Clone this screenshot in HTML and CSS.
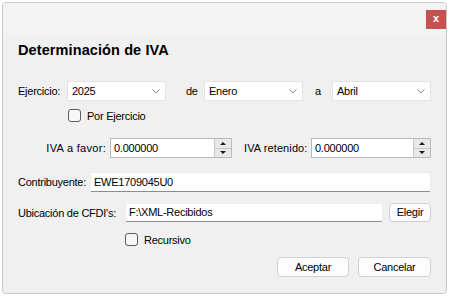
FILE: index.html
```html
<!DOCTYPE html>
<html lang="es">
<head>
    <meta charset="UTF-8">
    <meta name="viewport" content="width=device-width, initial-scale=1.0">
    <title>Determinación de IVA</title>
    <link rel="stylesheet" href="styles.css">
</head>
<body>
    <div class="window">
        <div class="titlebar">
            <div class="close">x</div>
        </div>
        <div class="content">
            <h2 class="title">Determinación de IVA</h2>

            <!-- periodo -->
            <div class="row row-period">
                <span class="lbl lbl-ejercicio">Ejercicio:</span>
                <div class="select">2025<svg class="chev" width="8" height="5" viewBox="0 0 8 5"><polyline points="0.5,0.5 4,4 7.5,0.5" fill="none" stroke="#8a8a8a" stroke-width="1"/></svg></div>
                <span class="lbl lbl-de">de</span>
                <div class="select">Enero<svg class="chev" width="8" height="5" viewBox="0 0 8 5"><polyline points="0.5,0.5 4,4 7.5,0.5" fill="none" stroke="#8a8a8a" stroke-width="1"/></svg></div>
                <span class="lbl lbl-a">a</span>
                <div class="select">Abril<svg class="chev" width="8" height="5" viewBox="0 0 8 5"><polyline points="0.5,0.5 4,4 7.5,0.5" fill="none" stroke="#8a8a8a" stroke-width="1"/></svg></div>
            </div>
            <div class="row row-check check-ejercicio">
                <span class="check"></span><span class="check-lbl">Por Ejercicio</span>
            </div>

            <!-- importes -->
            <div class="row row-iva">
                <span class="lbl lbl-favor">IVA a favor:</span>
                <div class="spin spin-favor">
                    <span class="spin-val">0.000000</span>
                    <div class="spin-btns"><span class="up"></span><span class="down"></span></div>
                </div>
                <span class="lbl lbl-retenido">IVA retenido:</span>
                <div class="spin spin-retenido">
                    <span class="spin-val">0.000000</span>
                    <div class="spin-btns"><span class="up"></span><span class="down"></span></div>
                </div>
            </div>

            <div class="row row-contrib">
                <span class="lbl lbl-contrib">Contribuyente:</span>
                <div class="field field-contrib">EWE1709045U0</div>
            </div>

            <div class="row row-ubic">
                <span class="lbl lbl-ubic">Ubicación de CFDI's:</span>
                <div class="field field-ubic">F:\XML-Recibidos</div>
                <div class="btn btn-elegir">Elegir</div>
            </div>
            <div class="row row-check check-recursivo">
                <span class="check"></span><span class="check-lbl">Recursivo</span>
            </div>

            <div class="row row-actions">
                <div class="btn btn-aceptar">Aceptar</div>
                <div class="btn btn-cancelar">Cancelar</div>
            </div>
        </div>
    </div>
</body>
</html>
```

FILE: styles.css
```css
body {
    margin: 0;
    background: #ffffff;
    font-family: "Liberation Sans", Arial, sans-serif;
    font-size: 11px;
    letter-spacing: -0.25px;
    color: #000;
}
.window {
    margin: 2px 0 0 2px;
    width: 443px;
    height: 290px;
    border: 1px solid #c9c9c9;
    border-radius: 4px;
    background: #f0f0f0;
    overflow: hidden;
}
.titlebar {
    height: 31px;
    background: #f3f3f3;
    display: flex;
    justify-content: flex-end;
    align-items: flex-start;
}
.close {
    margin-top: 7px;
    width: 20px;
    height: 19px;
    background: #c75050;
    color: #fff;
    font-weight: bold;
    font-size: 11px;
    letter-spacing: 0;
    line-height: 17px;
    text-align: center;
}
.content {
    padding: 0 15px;
}
.title {
    margin: 7px 0 0 0;
    font-size: 14.5px;
    letter-spacing: 0.1px;
    line-height: 18px;
    font-weight: bold;
}
.row {
    display: flex;
    align-items: center;
}
.lbl {
    white-space: nowrap;
}
.row-period { margin-top: 22px; height: 20px; }
.lbl-ejercicio { width: 49px; }
.lbl-de { margin-left: 20px; width: 18px; }
.lbl-a { margin-left: 12px; width: 17px; }
.select {
    position: relative;
    box-sizing: border-box;
    width: 99px;
    height: 20px;
    line-height: 18px;
    padding-left: 4px;
    background: #fff;
    border: 1px solid #e3e3e3;
    border-radius: 2px;
}
.chev {
    position: absolute;
    right: 5px;
    top: 7px;
}
.row-check { height: 13px; }
.check-ejercicio { margin-top: 8px; padding-left: 50px; }
.check-recursivo { margin-top: 11px; padding-left: 107px; }
.check {
    box-sizing: border-box;
    width: 13px;
    height: 13px;
    border: 1px solid #5c5c5c;
    border-radius: 3px;
    background: #f7f7f7;
}
.check-lbl { margin-left: 6px; }

.row-iva { margin-top: 16px; height: 20px; }
.lbl-favor { width: 88px; text-align: right; margin-right: 4px; letter-spacing: 0.3px; }
.lbl-retenido { margin-left: 12px; width: 62px; margin-right: 5px; letter-spacing: 0.1px; }
.spin {
    box-sizing: border-box;
    height: 20px;
    display: flex;
    background: #fff;
    border: 1px solid #b9b9b9;
}
.spin-favor { width: 122px; }
.spin-retenido { width: 120px; }
.spin-val {
    flex: 1;
    line-height: 18px;
    padding-left: 3px;
}
.spin-btns {
    width: 16px;
    display: flex;
    flex-direction: column;
    border-left: 1px solid #c9c9c9;
}
.spin-btns span {
    flex: 1;
    position: relative;
    background: #e9e9e9;
}
.spin-btns .up { border-bottom: 1px solid #c9c9c9; }
.spin-btns span::after {
    content: "";
    position: absolute;
    left: 5px;
    top: 3px;
    border-left: 3px solid transparent;
    border-right: 3px solid transparent;
}
.spin-btns .up::after { border-bottom: 3px solid #1a1a1a; }
.spin-btns .down::after { border-top: 3px solid #1a1a1a; top: 2px; }

.field {
    box-sizing: border-box;
    height: 20px;
    line-height: 18px;
    padding-left: 3px;
    background: #fff;
    border: 1px solid #ececec;
    border-bottom-color: #8c8c8c;
    border-radius: 2px;
}
.row-contrib { margin-top: 14px; height: 20px; }
.lbl-contrib { width: 72px; }
.field-contrib { width: 341px; }
.row-ubic { margin-top: 11px; height: 19px; }
.lbl-ubic { width: 107px; }
.field-ubic { width: 258px; height: 19px; line-height: 17px; }

.btn {
    box-sizing: border-box;
    height: 20px;
    line-height: 18px;
    text-align: center;
    background: #fdfdfd;
    border: 1px solid #d0d0d0;
    border-radius: 4px;
}
.btn-elegir { margin-left: 6px; width: 42px; height: 19px; line-height: 17px; }
.row-actions {
    margin-top: 11px;
    justify-content: flex-end;
    gap: 9px;
}
.btn-aceptar { width: 72px; }
.btn-cancelar { width: 73px; }
```
